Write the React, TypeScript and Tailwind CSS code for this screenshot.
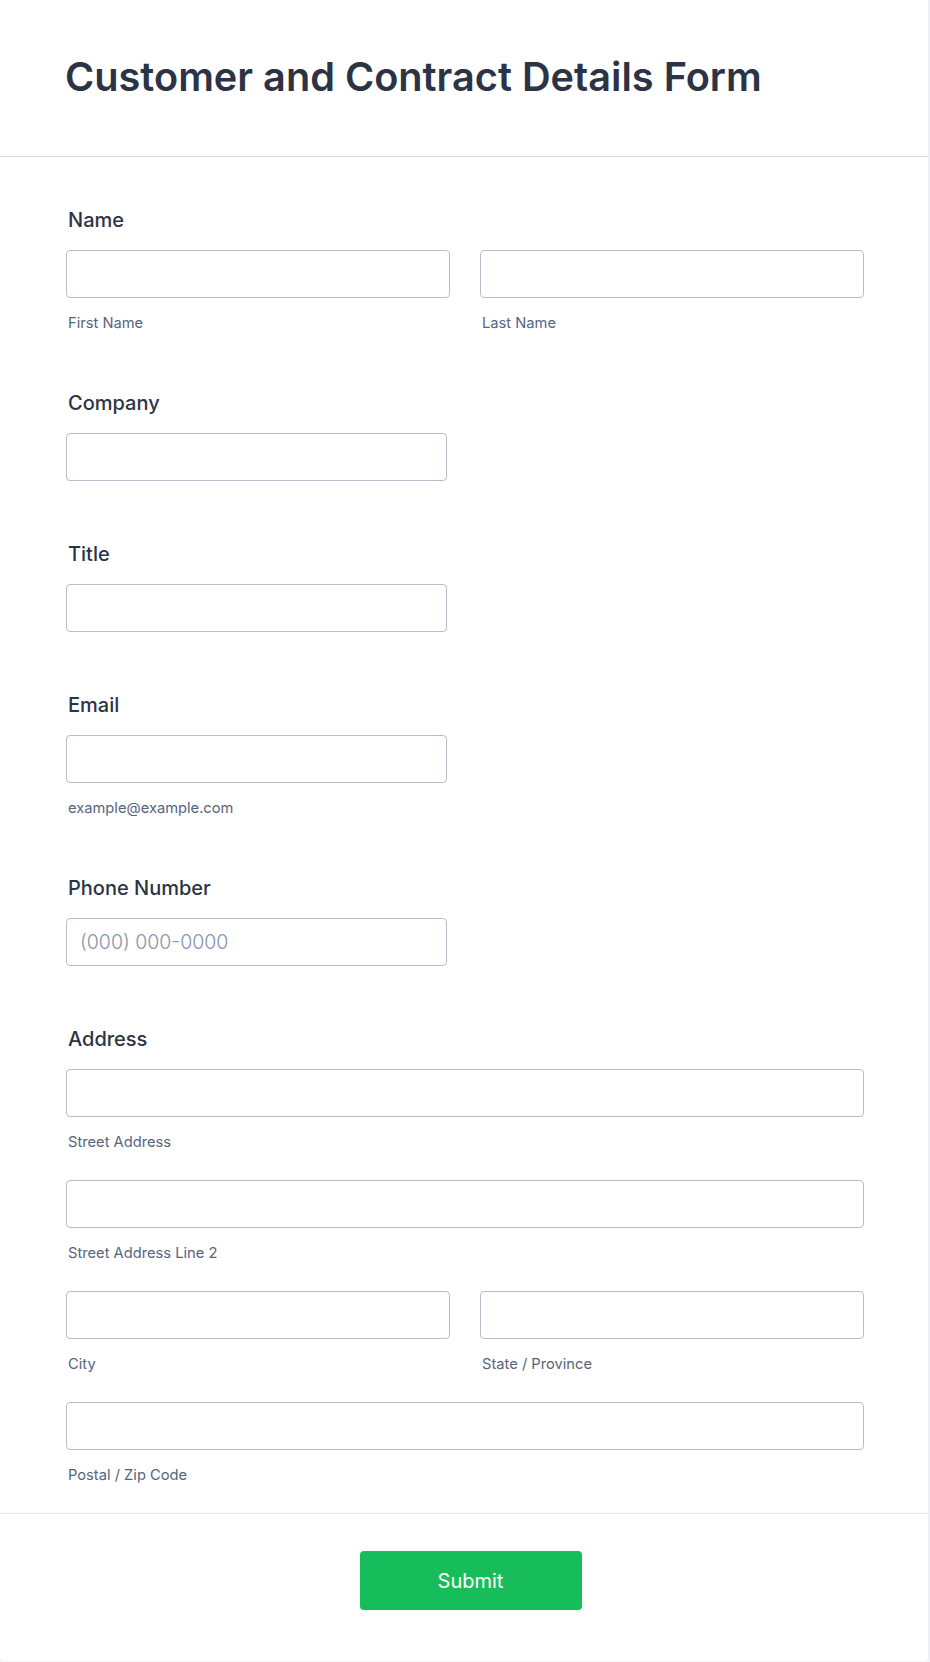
import React from 'react'

interface FieldProps {
  label: string
  sublabel?: string
  placeholder?: string
}

const Input: React.FC<{ placeholder?: string; className?: string }> = ({ placeholder, className }) => (
  <input
    type="text"
    placeholder={placeholder}
    className={`h-12 rounded-[4px] border border-[#b8bdc9] bg-white pl-[13px] text-[19.5px] font-light text-[#2c3345] placeholder:text-[#8894ab] outline-none ${className ?? ''}`}
  />
)

const SubLabel: React.FC<{ text: string }> = ({ text }) => (
  <span className="mt-[18px] block pl-[2px] text-[14.7px] leading-[14px] text-[#57647e]">{text}</span>
)

const Label: React.FC<{ text: string }> = ({ text }) => (
  <label className="mb-[18px] block pl-[2px] text-[20px] font-medium leading-6 text-[#2c3345]">{text}</label>
)

const Field: React.FC<FieldProps> = ({ label, sublabel, placeholder }) => (
  <div className="pb-[61px]">
    <Label text={label} />
    <Input placeholder={placeholder} className="w-[381px]" />
    {sublabel && <SubLabel text={sublabel} />}
  </div>
)

const App: React.FC = () => {
  return (
    <div className="min-h-screen bg-[#f3f3fe] font-['Inter','Noto_Sans',sans-serif]">
      <div className="w-[929px] rounded-b-[4px] border-r border-[#eceef3] bg-white">
        <header className="border-b border-[#d3d8e4] px-[65px] pb-[58px] pt-[56px]">
          <h1 className="text-[39.7px] font-semibold leading-[42px] text-[#2c3345]">
            Customer and Contract Details Form
          </h1>
        </header>

        <main className="pl-[66px] pr-[64px] pt-[51px]">
          {/* name */}
          <div className="pb-[61px]">
            <Label text="Name" />
            <div className="grid grid-cols-2 gap-x-[30px]">
              <div>
                <Input className="w-full" />
                <SubLabel text="First Name" />
              </div>
              <div>
                <Input className="w-full" />
                <SubLabel text="Last Name" />
              </div>
            </div>
          </div>

          <Field label="Company" />
          <Field label="Title" />
          <Field label="Email" sublabel="example@example.com" />
          <Field label="Phone Number" placeholder="(000) 000-0000" />

          {/* address */}
          <div className="pb-[31px]">
            <Label text="Address" />
            <div className="flex flex-col gap-y-[31px]">
              <div>
                <Input className="w-full" />
                <SubLabel text="Street Address" />
              </div>
              <div>
                <Input className="w-full" />
                <SubLabel text="Street Address Line 2" />
              </div>
              <div className="grid grid-cols-2 gap-x-[30px]">
                <div>
                  <Input className="w-full" />
                  <SubLabel text="City" />
                </div>
                <div>
                  <Input className="w-full" />
                  <SubLabel text="State / Province" />
                </div>
              </div>
              <div>
                <Input className="w-full" />
                <SubLabel text="Postal / Zip Code" />
              </div>
            </div>
          </div>
        </main>

        <footer className="flex justify-center border-t border-[#e3e6ee] pb-[51px] pl-[13px] pt-[37px]">
          <button className="h-[59px] w-[222px] rounded-[4px] bg-[#18bd5b] text-[20px] font-normal text-white">
            Submit
          </button>
        </footer>
      </div>
    </div>
  )
}

export default App
